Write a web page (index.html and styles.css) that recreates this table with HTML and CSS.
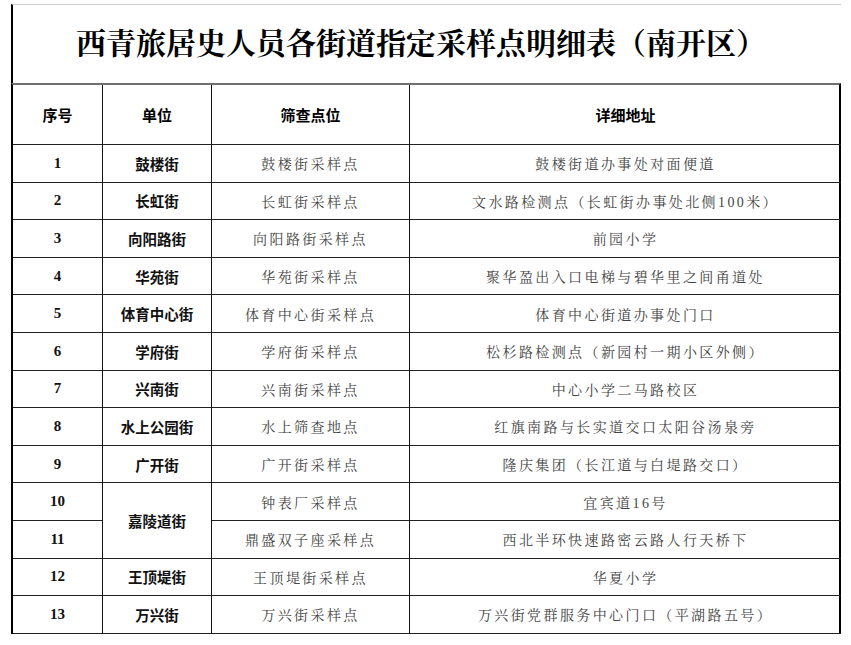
FILE: index.html
```html
<!DOCTYPE html>
<html lang="zh-CN">
<head>
<meta charset="utf-8">
<title>西青旅居史人员各街道指定采样点明细表（南开区）</title>
<link rel="stylesheet" href="styles.css">
</head>
<body>
<div class="sheet">
  <div class="title-block">
    <h1 class="title">西青旅居史人员各街道指定采样点明细表（南开区）</h1>
  </div>
  <div class="grid">
    <div class="cell head">序号</div>
    <div class="cell head">单位</div>
    <div class="cell head">筛查点位</div>
    <div class="cell head last">详细地址</div>

    <div class="cell num">1</div><div class="cell unit">鼓楼街</div><div class="cell site">鼓楼街采样点</div><div class="cell addr">鼓楼街道办事处对面便道</div>
    <div class="cell num">2</div><div class="cell unit">长虹街</div><div class="cell site">长虹街采样点</div><div class="cell addr">文水路检测点（长虹街办事处北侧100米）</div>
    <div class="cell num">3</div><div class="cell unit">向阳路街</div><div class="cell site">向阳路街采样点</div><div class="cell addr">前园小学</div>
    <div class="cell num">4</div><div class="cell unit">华苑街</div><div class="cell site">华苑街采样点</div><div class="cell addr">聚华盈出入口电梯与碧华里之间甬道处</div>
    <div class="cell num">5</div><div class="cell unit">体育中心街</div><div class="cell site">体育中心街采样点</div><div class="cell addr">体育中心街道办事处门口</div>
    <div class="cell num">6</div><div class="cell unit">学府街</div><div class="cell site">学府街采样点</div><div class="cell addr">松杉路检测点（新园村一期小区外侧）</div>
    <div class="cell num">7</div><div class="cell unit">兴南街</div><div class="cell site">兴南街采样点</div><div class="cell addr">中心小学二马路校区</div>
    <div class="cell num">8</div><div class="cell unit">水上公园街</div><div class="cell site">水上筛查地点</div><div class="cell addr">红旗南路与长实道交口太阳谷汤泉旁</div>
    <div class="cell num">9</div><div class="cell unit">广开街</div><div class="cell site">广开街采样点</div><div class="cell addr">隆庆集团（长江道与白堤路交口）</div>
    <div class="cell num">10</div><div class="cell unit span2">嘉陵道街</div><div class="cell site">钟表厂采样点</div><div class="cell addr">宜宾道16号</div>
    <div class="cell num">11</div><div class="cell site">鼎盛双子座采样点</div><div class="cell addr">西北半环快速路密云路人行天桥下</div>
    <div class="cell num">12</div><div class="cell unit">王顶堤街</div><div class="cell site">王顶堤街采样点</div><div class="cell addr">华夏小学</div>
    <div class="cell num">13</div><div class="cell unit">万兴街</div><div class="cell site">万兴街采样点</div><div class="cell addr">万兴街党群服务中心门口（平湖路五号）</div>
  </div>
</div>
</body>
</html>
```

FILE: styles.css
```css
html, body {
  margin: 0;
  padding: 0;
  background: #ffffff;
}

.sheet {
  margin: 4px 0 0 11px;
  width: 830px;
}

.title-block {
  height: 78px;
  border-top: 1px solid #cfcfcf;
  border-left: 2px solid #000;
  display: flex;
  align-items: center;
  justify-content: center;
  padding-right: 12px;
}

.title {
  margin: 0;
  font-family: "Liberation Serif", "Noto Serif CJK SC", "Noto Sans CJK SC", serif;
  font-weight: bold;
  font-size: 30px;
  line-height: 1;
  color: #000;
}

.grid {
  display: grid;
  grid-template-columns: 90px 109px 198px 431px;
  grid-template-rows: 60px repeat(13, 37.6px);
  border-top: 2px solid #707070;
  border-left: 2px solid #000;
  border-right: 2px solid #000;
}

.cell {
  display: flex;
  align-items: center;
  justify-content: center;
  border-right: 1px solid #111;
  border-bottom: 1px solid #222;
  box-sizing: border-box;
  white-space: nowrap;
}

.cell.last,
.cell.addr {
  border-right: none;
}

.head {
  font-family: "Noto Sans CJK SC", sans-serif;
  font-weight: bold;
  font-size: 15px;
  color: #000;
}

.num {
  font-family: "Liberation Serif", "Noto Sans CJK SC", serif;
  font-weight: bold;
  font-size: 15px;
  color: #111;
}

.unit {
  font-family: "Noto Sans CJK SC", sans-serif;
  font-weight: bold;
  font-size: 14.5px;
  color: #111;
}

.span2 {
  grid-row: span 2;
}

.site,
.addr {
  font-family: "Liberation Serif", "Noto Serif CJK SC", "Noto Sans CJK SC", serif;
  font-size: 14px;
  letter-spacing: 2.4px;
  color: #444;
}
```
